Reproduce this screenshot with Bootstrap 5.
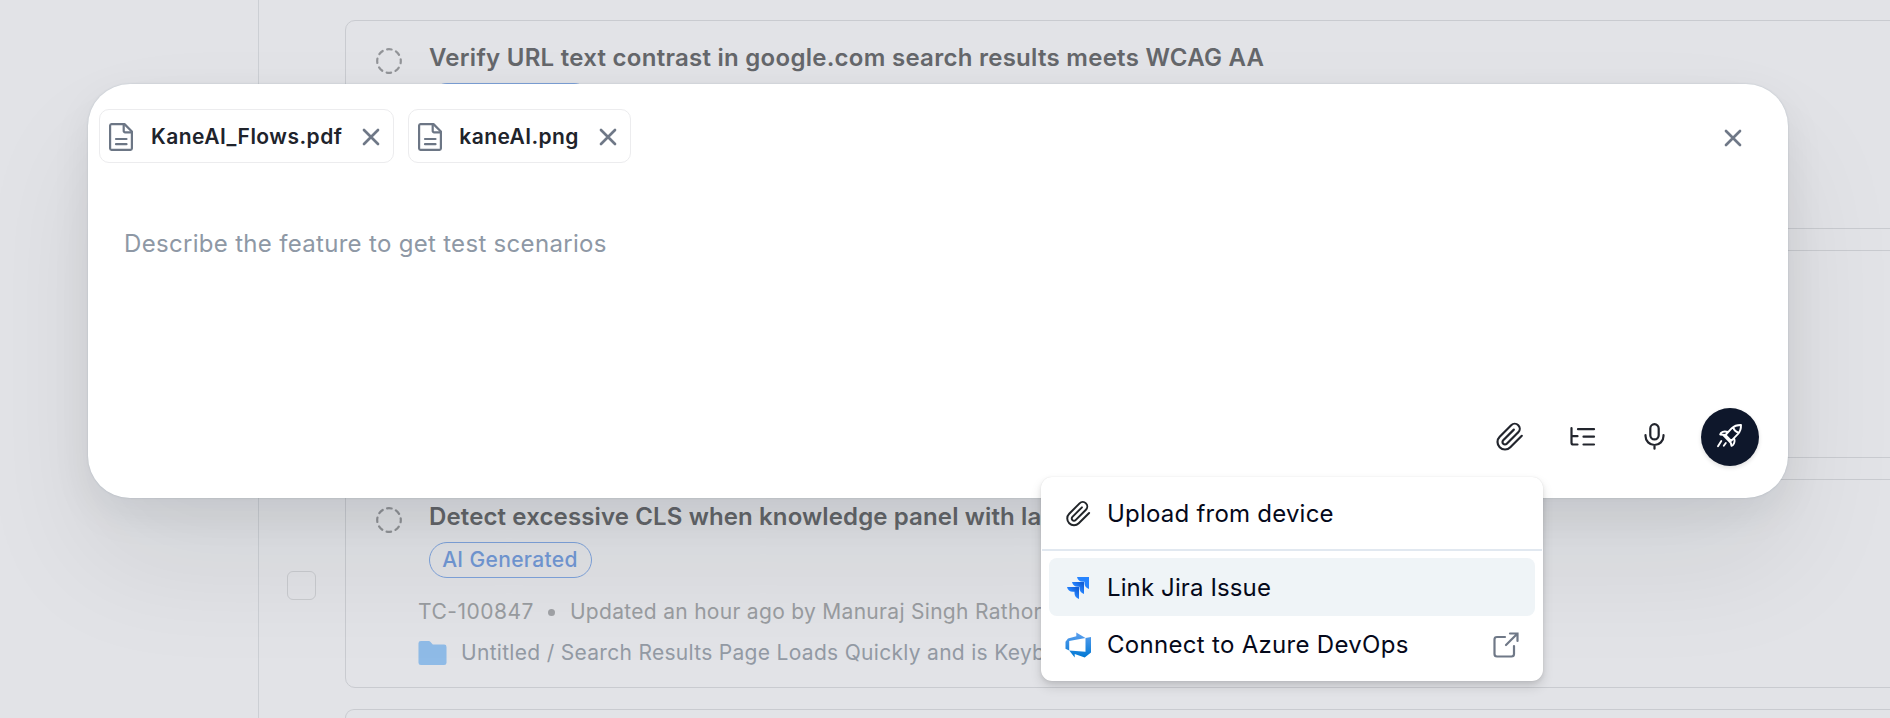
<!DOCTYPE html>
<html lang="en">
<head>
<meta charset="utf-8">
<meta name="viewport" content="width=device-width, initial-scale=1">
<title>Test scenarios</title>
<link href="https://cdn.jsdelivr.net/npm/bootstrap@5.3.0/dist/css/bootstrap.min.css" rel="stylesheet">
<style>
  body { font-family: Inter, "Liberation Sans", sans-serif; background: #e2e3e7; height: 718px; color: #22252d; }
  svg { display: block; flex: none; }
  .page { height: 718px; }
  .side { width: 259px; border-right: 1px solid #cccfd4; }
  .list { padding-top: 20px; gap: 21px; height: 718px; }
  .pick { width: 86px; padding-left: 28px; }
  .pick i { width: 29px; height: 29px; border: 1px solid #c9cbcf; border-radius: 6px; margin-top: 4px; }
  .case { height: 208.6px; border: 1px solid #c9cbd0; border-radius: 10px; margin-right: -12px; padding: 14px 0 0 30px; white-space: nowrap; }
  .case.last { height: 9px; border-bottom: 0; border-radius: 10px 10px 0 0; padding: 0; }
  .case-title { font-size: 24px; font-weight: 600; letter-spacing: .27px; line-height: 46px; color: #65676b; }
  .case-title.tight { letter-spacing: .13px; }
  .case-head { gap: 27px; height: 46px; }
  .case-head svg { margin-top: 5px; }
  .tag { width: 163px; height: 36px; border: 1px solid #7fa3dc; border-radius: 18px; color: #7298d5; font-size: 21px; font-weight: 500; letter-spacing: .36px; margin: 2px 0 0 52.5px; }
  .meta { font-size: 21px; letter-spacing: .3px; color: #999ca0; line-height: 30px; margin: 19px 0 0 42px; }
  .meta .id { letter-spacing: .5px; }
  .meta .dot { width: 7px; height: 7px; border-radius: 50%; background: #a0a2a6; margin: 0 15px 0 14px; }
  .path { font-size: 21px; letter-spacing: .3px; color: #939aa4; line-height: 30px; margin: 11px 0 0 42px; gap: 14px; }
  .composer { left: 88px; top: 84px; width: 1700px; height: 414px; border-radius: 42px; background: #fff;
    box-shadow: 0 64px 120px rgba(15,20,25,.08), 0 16px 40px rgba(15,20,25,.07), 0 0 2px rgba(80,110,130,.25); padding: 25px 29px 32px 11px; }
  .file { height: 54px; border: 1px solid #ececee; border-radius: 10px; padding: 1px 13px 0 9px; font-size: 21px; font-weight: 600; letter-spacing: .47px; color: #20232b; }
  .file span { margin: 0 20px 0 18px; }
  .file.image { margin-left: 14px; letter-spacing: .4px; }
  .file.image span { margin: 0 20px 0 17px; }
  .dismiss { margin: 3px 17px 0 auto; }
  .hint { font-size: 24px; letter-spacing: .31px; color: #8e98a5; line-height: 36px; margin: 63px 0 0 25px; }
  .tools { gap: 44px; }
  .send { width: 58px; height: 58px; background: #0e172b; box-shadow: 0 2px 4px rgba(0,0,0,.12); margin-left: -12px; }
  .attach { left: 1041px; top: 477px; width: 502px; height: 204px; border-radius: 11px; background: #fff; box-shadow: 0 6px 12px rgba(0,0,0,.12), 0 2px 5px rgba(0,0,0,.08), 0 0 1px rgba(0,0,0,.12); font-size: 24px; letter-spacing: .3px; color: #05091a; }
  .attach .option { height: 58px; margin: 0 8px; padding: 0 16px; gap: 15px; border-radius: 8px; }
  .attach .option.on { background: #eff4f7; margin-top: 7px; letter-spacing: .12px; padding-top: 1px; }
  .attach .first { height: 72px; padding-top: 1px; letter-spacing: .22px; }
  .attach .rule { height: 2px; background: #e1e8f0; margin: 0 1px; }
</style>
</head>
<body class="overflow-hidden position-relative">
<svg width="0" height="0" class="position-absolute">
  <defs>
    <symbol id="clip" viewBox="0 0 24 24"><path d="M21.44 11.05l-9.19 9.19a6 6 0 0 1-8.49-8.49l9.19-9.19a4 4 0 0 1 5.66 5.66l-9.2 9.19a2 2 0 0 1-2.83-2.83l8.49-8.48" fill="none" stroke="currentColor" stroke-width="1.75" stroke-linecap="round" stroke-linejoin="round"/></symbol>
    <symbol id="ring" viewBox="0 0 26 26"><circle cx="13" cy="13" r="11.8" fill="none" stroke="#929498" stroke-width="2.200" stroke-linecap="round" stroke-dasharray="4.600 4.670" stroke-dashoffset="2.300"/></symbol>
    <symbol id="doc" viewBox="0 0 24 28"><g fill="none" stroke="#6c7685" stroke-width="2.200" stroke-linejoin="round" stroke-linecap="round"><path d="M2.500 1.100H15.500L22.900 8.500V25.500A1.500 1.500 0 0 1 21.500 26.900H2.500A1.500 1.500 0 0 1 1.100 25.500V2.500A1.500 1.500 0 0 1 2.500 1.100Z"/><path d="M14.700 1.500V7.500A1.500 1.500 0 0 0 16.200 9.300H22.500M7 16H17.500M7 21.200H17.500"/></g></symbol>
    <symbol id="cross" viewBox="0 0 18 18"><path d="M2 2l14 14M16 2L2 16" fill="none" stroke="#6f7887" stroke-width="2.700" stroke-linecap="round"/></symbol>
  </defs>
</svg>

<div class="page d-flex overflow-hidden">
  <aside class="side flex-shrink-0"></aside>
  <main class="list flex-grow-1 d-flex flex-column overflow-hidden">
    <div class="d-flex">
      <div class="pick flex-shrink-0"></div>
      <div class="case flex-grow-1">
        <div class="case-head d-flex align-items-center"><svg width="26" height="26"><use href="#ring"/></svg><span class="case-title">Verify URL text contrast in google.com search results meets WCAG AA</span></div>
        <div class="tag d-flex align-items-center justify-content-center">AI Generated</div>
      </div>
    </div>
    <div class="d-flex"><div class="pick flex-shrink-0"></div><div class="case flex-grow-1"></div></div>
    <div class="d-flex">
      <div class="pick d-flex align-items-center flex-shrink-0"><i></i></div>
      <div class="case flex-grow-1">
        <div class="case-head d-flex align-items-center"><svg width="26" height="26"><use href="#ring"/></svg><span class="case-title tight">Detect excessive CLS when knowledge panel with la</span></div>
        <div class="tag d-flex align-items-center justify-content-center">AI Generated</div>
        <div class="meta d-flex align-items-center"><span class="id">TC-100847</span><span class="dot"></span><span>Updated an hour ago by Manuraj Singh Rathore</span></div>
        <div class="path d-flex align-items-center">
          <svg width="29" height="26" viewBox="0 0 30 26"><path d="M3 .5h8q1.200 0 2 1l2.300 2.700H27a2.500 2.500 0 0 1 2.500 2.500V23A2.500 2.500 0 0 1 27 25.500H3A2.500 2.500 0 0 1 .5 23V3A2.500 2.500 0 0 1 3 .5Z" fill="#8fbbe7"/></svg>
          <span>Untitled / Search Results Page Loads Quickly and is Keyb</span></div>
      </div>
    </div>
    <div class="d-flex"><div class="pick flex-shrink-0"></div><div class="case last flex-grow-1"></div></div>
  </main>
</div>

<section class="composer position-absolute d-flex flex-column">
  <div class="d-flex align-items-center">
    <div class="file d-flex align-items-center"><svg width="24" height="28"><use href="#doc"/></svg><span>KaneAI_Flows.pdf</span><svg width="18" height="18"><use href="#cross"/></svg></div>
    <div class="file image d-flex align-items-center"><svg width="24" height="28"><use href="#doc"/></svg><span>kaneAI.png</span><svg width="18" height="18"><use href="#cross"/></svg></div>
    <button class="dismiss btn border-0 p-0" aria-label="Close"><svg width="18" height="18"><use href="#cross"/></svg></button>
  </div>
  <div class="hint">Describe the feature to get test scenarios</div>
  <div class="tools d-flex align-items-center justify-content-end mt-auto">
    <svg width="30" height="30"><use href="#clip"/></svg>
    <svg width="28" height="28" viewBox="0 0 28 28"><path d="M2.500 5.200V19.700Q2.500 21.500 4.300 21.500H8.500M2.500 13.200H8.500M9 6.200H25M14.500 13.700H25M14.500 21.500H25" fill="none" stroke="#22252d" stroke-width="2.200" stroke-linecap="round"/></svg>
    <svg width="28" height="28" viewBox="0 0 28 28"><path d="M9.300 5.400a4.200 4.200 0 0 1 8.400 0v6.800a4.200 4.200 0 0 1-8.400 0ZM4.500 12.200v.8a9 9 0 0 0 18 0v-.8M13.500 22V25.700" fill="none" stroke="#22252d" stroke-width="2.200" stroke-linecap="round"/></svg>
    <button class="send btn rounded-circle border-0 p-0 d-flex align-items-center justify-content-center" aria-label="Send">
      <svg width="28" height="28" viewBox="0 0 28 28"><path d="M10 12.500L16.300 5.700Q20 2.300 25.500 2.500Q25.700 8 22.300 11.700L15.700 18.300ZM17.500 4.800Q19 9 23.200 10.500M10.200 12.300L12.500 9.500Q8 8 5.500 10.500L4.700 12L10 12.500M7.500 12.400L15.700 20.800M15.600 18.200L18.500 15.700Q20 19.500 17.500 22.500L16 23.300L15 20M5.800 18.500L2.500 23.800M10.300 20.500L8.300 23.300" transform="translate(-.5 -.5)" fill="none" stroke="#fff" stroke-width="1.900" stroke-linecap="round" stroke-linejoin="round"/></svg>
    </button>
  </div>
</section>

<div class="attach position-absolute d-flex flex-column">
  <div class="option first d-flex align-items-center"><svg width="27" height="28" class="text-dark"><use href="#clip"/></svg><span>Upload from device</span></div>
  <div class="rule"></div>
  <div class="option on d-flex align-items-center">
    <svg width="27" height="26" viewBox="0 0 27 26"><defs><linearGradient id="jg" x1="1" y1="0" x2="0" y2="1"><stop offset=".15" stop-color="#1260d8"/><stop offset=".55" stop-color="#2684ff"/></linearGradient></defs><path d="M12 2H24V14Q19.500 12.500 19.500 8V6.700H18Q13 6.700 12 2Z" fill="#2684ff"/><path d="M7 7H19V19Q14.500 17.500 14.500 13V11.700H13Q8 11.700 7 7Z" fill="url(#jg)"/><path d="M2 12H14V24Q9.500 22.500 9.500 18V16.700H8Q3 16.700 2 12Z" fill="url(#jg)"/></svg>
    <span>Link Jira Issue</span></div>
  <div class="option d-flex align-items-center">
    <svg width="27" height="26" viewBox="0 0 27 26"><defs><linearGradient id="az" x1="0" y1="0" x2="0" y2="1"><stop offset="0" stop-color="#5ea0ef"/><stop offset="1" stop-color="#0078d4"/></linearGradient></defs><path d="M26 5V20.500L19.700 25.500L9.700 22V25.500L4.200 18.500L20.500 19.800V6ZM20.500 6L11.300 .5V4.200L3 6.500L.5 9.700V16.800L4.200 18.500V9Z" fill="url(#az)"/></svg>
    <span>Connect to Azure DevOps</span>
    <svg class="ms-auto" width="26" height="26" viewBox="0 0 26 26"><path d="M12 5H4Q1.500 5 1.500 7.500V22Q1.500 24.500 4 24.500H18.500Q21 24.500 21 22V14M17 1.500H24.500V9M24 2L13 13" fill="none" stroke="#6f7887" stroke-width="2.200" stroke-linecap="round"/></svg>
  </div>
</div>
<script src="https://cdn.jsdelivr.net/npm/bootstrap@5.3.0/dist/js/bootstrap.bundle.min.js"></script>
</body>
</html>
